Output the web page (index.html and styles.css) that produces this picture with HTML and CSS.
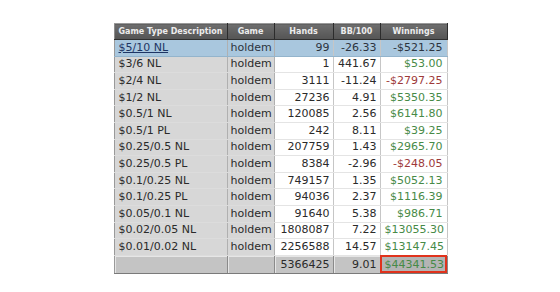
FILE: index.html
```html
<!DOCTYPE html>
<html>
<head>
<meta charset="utf-8">
<link rel="stylesheet" href="styles.css">
</head>
<body>
<div class="wrap">
<table class="stats">
<colgroup>
<col class="c1"><col class="c2"><col class="c3"><col class="c4"><col class="c5">
</colgroup>
<thead>
<tr><th>Game Type Description</th><th>Game</th><th>Hands</th><th>BB/100</th><th>Winnings</th></tr>
</thead>
<tbody>
<tr class="sel"><td class="g"><a href="#">$5/10 NL</a></td><td class="g">holdem</td><td class="n">99</td><td class="n">-26.33</td><td class="n neg">-$521.25</td></tr>
<tr><td class="g">$3/6 NL</td><td class="g">holdem</td><td class="n">1</td><td class="n">441.67</td><td class="n pos">$53.00</td></tr>
<tr><td class="g">$2/4 NL</td><td class="g">holdem</td><td class="n">3111</td><td class="n">-11.24</td><td class="n neg">-$2797.25</td></tr>
<tr><td class="g">$1/2 NL</td><td class="g">holdem</td><td class="n">27236</td><td class="n">4.91</td><td class="n pos">$5350.35</td></tr>
<tr><td class="g">$0.5/1 NL</td><td class="g">holdem</td><td class="n">120085</td><td class="n">2.56</td><td class="n pos">$6141.80</td></tr>
<tr><td class="g">$0.5/1 PL</td><td class="g">holdem</td><td class="n">242</td><td class="n">8.11</td><td class="n pos">$39.25</td></tr>
<tr><td class="g">$0.25/0.5 NL</td><td class="g">holdem</td><td class="n">207759</td><td class="n">1.43</td><td class="n pos">$2965.70</td></tr>
<tr><td class="g">$0.25/0.5 PL</td><td class="g">holdem</td><td class="n">8384</td><td class="n">-2.96</td><td class="n neg">-$248.05</td></tr>
<tr><td class="g">$0.1/0.25 NL</td><td class="g">holdem</td><td class="n">749157</td><td class="n">1.35</td><td class="n pos">$5052.13</td></tr>
<tr><td class="g">$0.1/0.25 PL</td><td class="g">holdem</td><td class="n">94036</td><td class="n">2.37</td><td class="n pos">$1116.39</td></tr>
<tr><td class="g">$0.05/0.1 NL</td><td class="g">holdem</td><td class="n">91640</td><td class="n">5.38</td><td class="n pos">$986.71</td></tr>
<tr><td class="g">$0.02/0.05 NL</td><td class="g">holdem</td><td class="n">1808087</td><td class="n">7.22</td><td class="n pos">$13055.30</td></tr>
<tr><td class="g">$0.01/0.02 NL</td><td class="g">holdem</td><td class="n">2256588</td><td class="n">14.57</td><td class="n pos">$13147.45</td></tr>
</tbody>
<tfoot>
<tr><td></td><td></td><td class="n">5366425</td><td class="n">9.01</td><td class="n pos hl">$44341.53</td></tr>
</tfoot>
</table>
</div>
</body>
</html>
```

FILE: styles.css
```css
html, body {
  margin: 0;
  padding: 0;
  background: #ffffff;
}
.wrap {
  width: 333px;
  margin: 23px auto 0;
}
.stats {
  width: 333px;
  border-collapse: collapse;
  table-layout: fixed;
  font-family: "DejaVu Sans", Verdana, sans-serif;
  font-size: 11px;
  color: #2a2a2a;
  border-left: 1px solid #9a9a9a;
  box-shadow: 0 1px 0 #6a6a6a;
}
.c1 { width: 113px; }
.c2 { width: 47px; }
.c3 { width: 59px; }
.c4 { width: 47px; }
.c5 { width: 67px; }
.stats th {
  height: 15px;
  padding: 0;
  font-size: 8px;
  font-weight: bold;
  color: #ececec;
  background: linear-gradient(#6e6e6e, #545454);
  border-right: 1px solid #2c2c2c;
  border-left: 1px solid #8c8c8c;
  border-bottom: 1px solid #2f2f2f;
  border-top: 1px solid #9a9a9a;
  text-align: center;
  white-space: nowrap;
  overflow: hidden;
}
.stats tbody td {
  height: 16.6px;
  padding: 0 3px 0 4px;
  white-space: nowrap;
  line-height: 14px;
  background: #ffffff;
  border-bottom: 1px solid #e4e4e4;
  border-right: 1px solid #c6c6c6;
  box-sizing: border-box;
}
.stats td.g {
  background: #d7d7d7;
  border-bottom-color: #dcdcdc;
  border-right-color: #b0b0b0;
}
.stats td.g + td.g {
  padding-left: 3px;
}
.stats td.n {
  text-align: right;
  padding-right: 3px;
}
.stats td:last-child {
  padding-right: 4px;
}
.stats tr.sel td {
  background: #a9c7de;
  border-bottom-color: #93b4cc;
  color: #2c3440;
}
.stats tr.sel a {
  color: #1e3564;
  text-decoration: underline;
}
.pos { color: #478a47; }
.neg { color: #9e3a3a; }
.stats tr.sel td.neg { color: #2c3440; }
.stats tfoot td {
  height: 17px;
  padding: 0 3px 0 4px;
  background: #c4c4c4;
  border-top: 1px solid #9a9a9a;
  border-right: 1px solid #8a8a8a;
  border-bottom: 1px solid #7a7a7a;
  box-shadow: inset 1px 1px 0 #e6e6e6;
  white-space: nowrap;
}
.stats tfoot td.n {
  text-align: right;
  padding-right: 3px;
}
.stats tfoot td.hl {
  background: #b4b4b4;
  outline: 2px solid #e0321c;
  outline-offset: -2px;
  padding-right: 4px;
  box-shadow: none;
}
```
